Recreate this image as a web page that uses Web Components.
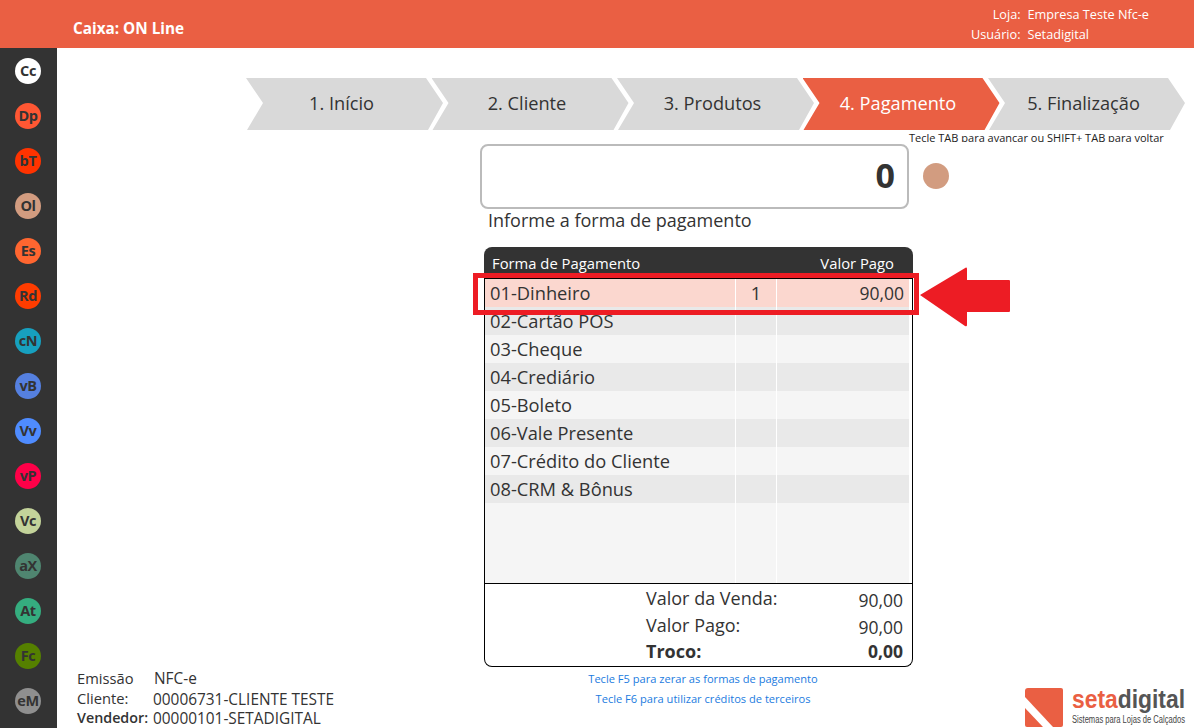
<!DOCTYPE html>
<html lang="pt-BR">
<head>
<meta charset="utf-8">
<title>Caixa</title>
<style>
    html, body { margin: 0; height: 100%; overflow: hidden; background: #fff; }
    body { font-family: "Open Sans", "Noto Sans", sans-serif; color: #333; }
    app-shell { height: 728px; }
</style>
</head>
<body>
<app-shell>
    <top-bar slot="top" title="Caixa: ON Line" store="Empresa Teste Nfc-e" user="Setadigital"></top-bar>
    <side-rail slot="rail">
        <rail-badge text="Cc" color="#ffffff"></rail-badge>
        <rail-badge text="Dp" color="#ff5733"></rail-badge>
        <rail-badge text="bT" color="#ff3300"></rail-badge>
        <rail-badge text="Ol" color="#d29c80"></rail-badge>
        <rail-badge text="Es" color="#ff6630"></rail-badge>
        <rail-badge text="Rd" color="#ff3c00"></rail-badge>
        <rail-badge text="cN" color="#17a0bf"></rail-badge>
        <rail-badge text="vB" color="#5580e0"></rail-badge>
        <rail-badge text="Vv" color="#4f8cff"></rail-badge>
        <rail-badge text="vP" color="#ff0048"></rail-badge>
        <rail-badge text="Vc" color="#c3d39a"></rail-badge>
        <rail-badge text="aX" color="#4f8570"></rail-badge>
        <rail-badge text="At" color="#35ad7f"></rail-badge>
        <rail-badge text="Fc" color="#558000"></rail-badge>
        <rail-badge text="eM" color="#8f8f8f"></rail-badge>
    </side-rail>

    <step-bar>
        <step-item text="1. Início"></step-item>
        <step-item text="2. Cliente"></step-item>
        <step-item text="3. Produtos"></step-item>
        <step-item text="4. Pagamento" active></step-item>
        <step-item text="5. Finalização"></step-item>
    </step-bar>
    <key-hint>Tecle TAB para avançar ou SHIFT+ TAB para voltar</key-hint>
    <amount-input value="0" label="Informe a forma de pagamento"></amount-input>
    <pay-table>
        <pay-row name="01-Dinheiro" qty="1" paid="90,00" selected></pay-row>
        <pay-row name="02-Cartão POS"></pay-row>
        <pay-row name="03-Cheque" light></pay-row>
        <pay-row name="04-Crediário"></pay-row>
        <pay-row name="05-Boleto" light></pay-row>
        <pay-row name="06-Vale Presente"></pay-row>
        <pay-row name="07-Crédito do Cliente" light></pay-row>
        <pay-row name="08-CRM &amp; Bônus"></pay-row>
        <pay-row light filler></pay-row>
    </pay-table>
    <bottom-row>
        <sale-info slot="info"></sale-info>
        <span slot="keys">Tecle F5 para zerar as formas de pagamento</span>
        <span slot="keys">Tecle F6 para utilizar créditos de terceiros</span>
        <brand-logo slot="logo"></brand-logo>
    </bottom-row>
</app-shell>

<script>
customElements.define('app-shell', class AppShell extends HTMLElement {

    constructor() {
        super();
        this.attachShadow({ mode: "open" });
        this.shadowRoot.innerHTML = /*html*/`
            <style>
                :host { display: grid; grid-template-columns: 57px 1fr; grid-template-rows: 48px 1fr; }
                .top { grid-column: 1 / 3; }
                .main { display: flex; flex-direction: column; padding-top: 30px; min-width: 0; }
            </style>
            <div class="top"><slot name="top"></slot></div>
            <slot name="rail"></slot>
            <div class="main"><slot></slot></div>
        `;
    }
})

customElements.define('top-bar', class TopBar extends HTMLElement {

    constructor() {
        super();
        this.attachShadow({ mode: "open" });
    }

    connectedCallback() {
        this.shadowRoot.innerHTML = /*html*/`
            <style>
                :host { display: flex; height: 48px; background: #ea5f43; color: #fff; justify-content: space-between; }
                .title { font-size: 15.3px; font-weight: 700; padding: 18px 0 0 73px; line-height: 20px; }
                .who {
                    display: grid; grid-template-columns: auto auto; column-gap: 7px;
                    font-size: 12.7px; line-height: 20px; padding: 4px 45px 0 0; align-content: start;
                }
                .who span:nth-child(odd) { text-align: right; }
            </style>
            <div class="title">${this.getAttribute('title')}</div>
            <div class="who">
                <span>Loja:</span><span>${this.getAttribute('store')}</span>
                <span>Usuário:</span><span>${this.getAttribute('user')}</span>
            </div>
        `;
    }
})

customElements.define('side-rail', class SideRail extends HTMLElement {

    constructor() {
        super();
        this.attachShadow({ mode: "open" });
        this.shadowRoot.innerHTML = /*html*/`
            <style>
                :host {
                    display: flex; flex-direction: column; align-items: center; gap: 19px;
                    background: #333; padding-top: 10px; height: 680px; box-sizing: border-box;
                    overflow: hidden; padding-right: 1px;
                }
            </style>
            <slot></slot>
        `;
    }
})

customElements.define('rail-badge', class RailBadge extends HTMLElement {

    constructor() {
        super();
        this.attachShadow({ mode: "open" });
    }

    connectedCallback() {
        this.shadowRoot.innerHTML = /*html*/`
            <style>
                :host {
                    display: flex; flex: none; width: 26px; height: 26px; border-radius: 50%;
                    box-sizing: border-box; padding-bottom: 2px;
                    align-items: center; justify-content: center;
                    background: ${this.getAttribute('color')}; color: #333;
                    font-size: 14.5px; font-weight: 700; letter-spacing: -0.4px;
                }
            </style>
            ${this.getAttribute('text')}
        `;
    }
})

customElements.define('step-bar', class StepBar extends HTMLElement {

    constructor() {
        super();
        this.attachShadow({ mode: "open" });
        this.shadowRoot.innerHTML = /*html*/`
            <style>
                :host { display: flex; padding-left: 189px; height: 52px; }
            </style>
            <slot></slot>
        `;
    }
})

customElements.define('step-item', class StepItem extends HTMLElement {

    constructor() {
        super();
        this.attachShadow({ mode: "open" });
    }

    connectedCallback() {
        const active = this.hasAttribute('active');
        this.shadowRoot.innerHTML = /*html*/`
            <style>
                :host {
                    display: flex; flex: none; width: 197px; height: 52px; margin-right: -11.5px;
                    align-items: center; justify-content: center; box-sizing: border-box; padding: 0 6px 3px 0;
                    background: ${active ? '#ea5f43' : '#d9d9d9'}; color: ${active ? '#fff' : '#333'};
                    font-size: 18.2px;
                    clip-path: polygon(0 0, 180px 0, 197px 25px, 182px 52px, 1px 52px, 17px 25px);
                }
            </style>
            ${this.getAttribute('text')}
        `;
    }
})

customElements.define('key-hint', class KeyHint extends HTMLElement {

    constructor() {
        super();
        this.attachShadow({ mode: "open" });
        this.shadowRoot.innerHTML = /*html*/`
            <style>
                :host {
                    display: block; height: 12px; overflow: hidden; padding-left: 852px;
                    font-size: 11px; line-height: 16px; white-space: nowrap; color: #222;
                }
            </style>
            <slot></slot>
        `;
    }
})

customElements.define('amount-input', class AmountInput extends HTMLElement {

    constructor() {
        super();
        this.attachShadow({ mode: "open" });
    }

    connectedCallback() {
        this.shadowRoot.innerHTML = /*html*/`
            <style>
                :host {
                    display: grid; grid-template-columns: 429px 26px; column-gap: 14px; align-items: center;
                    padding: 2px 0 0 423px;
                }
                .box {
                    height: 65px; box-sizing: border-box; border: 2px solid #bbb; border-radius: 8px;
                    display: flex; align-items: center; justify-content: flex-end;
                    padding: 0 12px 3px 0; font-size: 34px; font-weight: 700; color: #333;
                }
                .dot { width: 26px; height: 26px; border-radius: 50%; background: #d29c80; margin-top: -1px; }
                .label { grid-column: 1 / 3; margin-top: -1px; padding-left: 8px; font-size: 18px; line-height: 24px; }
            </style>
            <div class="box">${this.getAttribute('value')}</div>
            <div class="dot"></div>
            <div class="label">${this.getAttribute('label')}</div>
        `;
    }
})

customElements.define('pay-table', class PayTable extends HTMLElement {

    constructor() {
        super();
        this.attachShadow({ mode: "open" });
        this.shadowRoot.innerHTML = /*html*/`
            <style>
                :host {
                    display: block; position: relative; width: 429px; margin: 15px 0 0 427px;
                    box-sizing: border-box; height: 420px;
                }
                .head {
                    display: flex; justify-content: space-between; align-items: flex-end;
                    height: 31px; box-sizing: border-box; padding: 0 19px 5px 8px;
                    background: #333; color: #fff; font-size: 14.8px; line-height: 20px;
                    border-radius: 8px 8px 0 0;
                }
                .body {
                    display: flex; flex-direction: column; height: 306px; box-sizing: border-box;
                    border: 1px solid #000; padding-right: 3px; background: #fff;
                }
                .totals {
                    display: grid; grid-template-columns: 1fr auto; height: 83px; box-sizing: border-box;
                    border: 1px solid #000; border-top: 0; border-radius: 0 0 8px 8px;
                    padding: 1px 9px 0 161px; font-size: 18px; color: #333; align-content: start;
                }
                .totals div { height: 27px; line-height: 26px; }
                .totals .val { padding-top: 2px; height: 25px; font-size: 17.5px; text-align: right; }
                .totals .bold { font-weight: 700; height: 24px; line-height: 24px; }
                .totals .bold.num { text-align: right; font-size: 17.5px; }
                .mark {
                    position: absolute; left: -11px; top: 26px; width: 446px; height: 42px;
                    box-sizing: border-box; border: 5px solid #ed1c24; pointer-events: none;
                }
                svg { position: absolute; left: 436px; top: 20px; }
            </style>
            <div class="head"><span>Forma de Pagamento</span><span>Valor Pago</span></div>
            <div class="body"><slot></slot></div>
            <div class="totals">
                <div>Valor da Venda:</div><div class="val">90,00</div>
                <div>Valor Pago:</div><div class="val">90,00</div>
                <div class="bold">Troco:</div><div class="bold num">0,00</div>
            </div>
            <div class="mark"></div>
            <svg width="92" height="60" viewBox="0 0 92 60">
                <path fill="#ed1c24" d="M0 28 L46 0.5 Q47 0 47 2 V13 H89 Q90 13 90 14 V44 Q90 45 89 45 H47 V58 Q47 60 45 59 Z"/>
            </svg>
        `;
    }
})

customElements.define('pay-row', class PayRow extends HTMLElement {

    constructor() {
        super();
        this.attachShadow({ mode: "open" });
    }

    connectedCallback() {
        this.shadowRoot.innerHTML = /*html*/`
            <style>
                :host {
                    display: grid; flex: none; height: 28px; grid-template-columns: 251px 41px 1fr;
                    background: #e9e9e9; font-size: 18.3px; line-height: 28px; color: #333;
                }
                :host([light]) { background: #f5f5f5; }
                :host([selected]) { background: #fbd7cf; }
                :host([filler]) { flex: 1; }
                div { white-space: nowrap; height: 100%; }
                .name { padding-left: 5px; border-right: 1px solid #fff; }
                .qty { text-align: center; border-right: 1px solid #fff; }
                .paid { text-align: right; padding-right: 5px; font-size: 17.5px; }
            </style>
            <div class="name">${this.getAttribute('name') || ''}</div>
            <div class="qty">${this.getAttribute('qty') || ''}</div>
            <div class="paid">${this.getAttribute('paid') || ''}</div>
        `;
    }
})

customElements.define('bottom-row', class BottomRow extends HTMLElement {

    constructor() {
        super();
        this.attachShadow({ mode: "open" });
        this.shadowRoot.innerHTML = /*html*/`
            <style>
                :host { display: grid; grid-template-columns: 480px 332px 1fr; height: 61px; overflow: hidden; }
                .keys {
                    display: flex; flex-direction: column; align-items: center; padding-top: 2px;
                    font-size: 11.1px; line-height: 20px; color: #1b7be0;
                }
                .logo { display: flex; justify-content: flex-end; }
            </style>
            <slot name="info"></slot>
            <div class="keys"><slot name="keys"></slot></div>
            <div class="logo"><slot name="logo"></slot></div>
        `;
    }
})

customElements.define('sale-info', class SaleInfo extends HTMLElement {

    constructor() {
        super();
        this.attachShadow({ mode: "open" });
        this.shadowRoot.innerHTML = /*html*/`
            <style>
                :host {
                    display: grid; grid-template-columns: 76px 1fr; padding: 2px 0 0 20px; align-content: start;
                    font-size: 14.7px; line-height: 19.5px; color: #333;
                }
                :host > * { white-space: nowrap; }
                .vend { font-weight: 600; font-size: 14.3px; }
                .low { position: relative; top: 1px; font-size: 15.4px; }
            </style>
            <span>Emissão</span><span class="low" style="padding-left:1px;top:0">NFC-e</span>
            <span>Cliente:</span><span class="low">00006731-CLIENTE TESTE</span>
            <span class="vend">Vendedor:</span><span class="low">00000101-SETADIGITAL</span>
        `;
    }
})

customElements.define('brand-logo', class BrandLogo extends HTMLElement {

    constructor() {
        super();
        this.attachShadow({ mode: "open" });
        this.shadowRoot.innerHTML = /*html*/`
            <style>
                :host { display: block; width: 170px; height: 61px; }
                svg { display: block; }
            </style>
            <svg width="170" height="61" viewBox="0 0 170 61">
                <path fill="#ea5f43" d="M1 24 Q1 21 4 21 H37 Q39 21 39 23 V58 Q39 60 37 60 H29 L1 30 Z"/>
                <path fill="#ea5f43" d="M1 41 L19 60 H3 Q1 60 1 58 Z"/>
                <text x="48" y="41" font-family="'Liberation Sans', sans-serif" font-size="26" font-weight="700" textLength="113" lengthAdjust="spacingAndGlyphs"><tspan fill="#ea5f43">seta</tspan><tspan fill="#555">digital</tspan></text>
                <text x="48" y="56" font-family="'Liberation Sans', sans-serif" font-size="10" fill="#444" textLength="113" lengthAdjust="spacingAndGlyphs">Sistemas para Lojas de Calçados</text>
            </svg>
        `;
    }
})
</script>
</body>
</html>
